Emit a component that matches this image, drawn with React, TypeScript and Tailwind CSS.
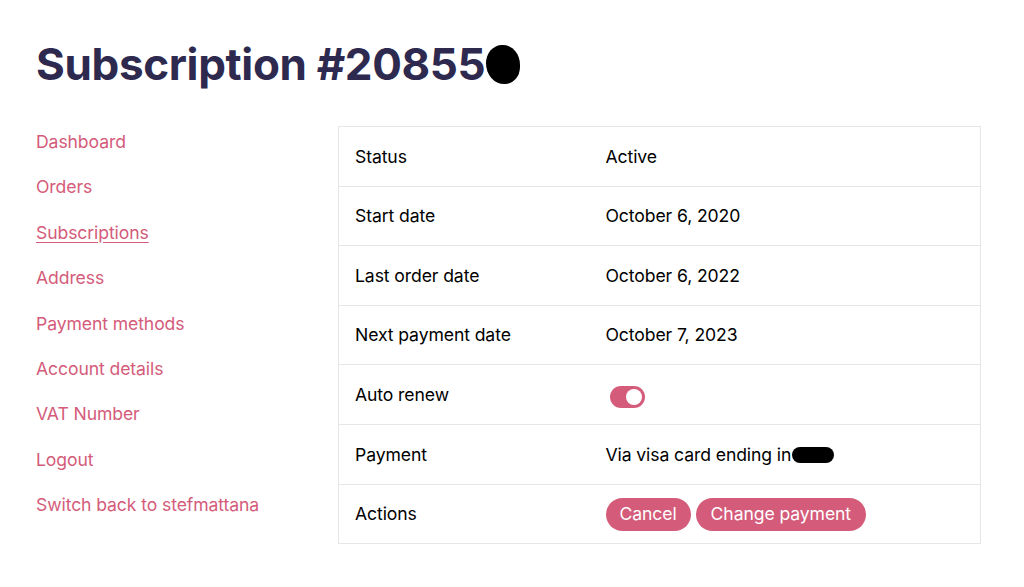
import { useState } from "react"

const navItems = [
  "Dashboard",
  "Orders",
  "Subscriptions",
  "Address",
  "Payment methods",
  "Account details",
  "VAT Number",
  "Logout",
  "Switch back to stefmattana"
]

function Toggle({ on, onChange }: { on: boolean, onChange: () => void }) {
  return (
    <button
      onClick={onChange}
      className={"flex h-[22px] w-[35px] items-center rounded-full px-[3px] " + (on ? "justify-end bg-[#d45b7a]" : "justify-start bg-gray-300")}
    >
      <span className="h-[16px] w-[16px] rounded-full bg-white" />
    </button>
  )
}

export default function App() {

  const [autoRenew, setAutoRenew] = useState(true)

  const rows: { label: string, value: React.ReactNode }[] = [
    { label: "Status", value: "Active" },
    { label: "Start date", value: "October 6, 2020" },
    { label: "Last order date", value: "October 6, 2022" },
    { label: "Next payment date", value: "October 7, 2023" },
    { label: "Auto renew", value: <div className="pl-[4px] pt-[3px]"><Toggle on={autoRenew} onChange={() => setAutoRenew(!autoRenew)} /></div> },
    {
      label: "Payment",
      value: (
        <span className="flex items-center">
          Via visa card ending in
          <span className="ml-[1px] inline-block h-[16px] w-[42px] rounded-[8px] bg-black" />
        </span>
      )
    },
    {
      label: "Actions",
      value: (
        <div className="flex gap-[5px]">
          <button className="h-[33px] rounded-full bg-[#d45b7a] px-[14px] text-white">Cancel</button>
          <button className="h-[33px] rounded-full bg-[#d45b7a] px-[15px] text-white">Change payment</button>
        </div>
      )
    }
  ]

  return (
    <div className="min-h-[587px] bg-white px-[36px] pt-[37px] font-['Inter',sans-serif]">

      <h1 className="flex items-center text-[44px] font-bold leading-[54px] tracking-[-0.35px] text-[#2e2a4f]">
        Subscription #20855
        <span className="ml-[1px] inline-block h-[39px] w-[34px] rounded-[48%_52%_45%_55%] bg-black" />
      </h1>

      <div className="mt-[35px] flex tracking-[-0.1px]">

        <nav className="flex w-[302px] flex-col pt-[4px]">
          {navItems.map(item => (
            <a
              key={item}
              href="#"
              className={"h-[45.4px] text-[17.6px] leading-[24px] text-[#d45b7a] " + (item === "Subscriptions" ? "underline underline-offset-[3px]" : "")}
            >
              {item}
            </a>
          ))}
        </nav>

        <table className="w-[643px] border-collapse text-[17.6px] text-black">
          <tbody>
            {rows.map(r => (
              <tr key={r.label} className="h-[59.6px] border border-[#e6e6e6]">
                <td className="w-[267px] pl-[16px] pt-[1px]">{r.label}</td>
                <td className="pt-[1px]">{r.value}</td>
              </tr>
            ))}
          </tbody>
        </table>

      </div>

    </div>
  )
}
